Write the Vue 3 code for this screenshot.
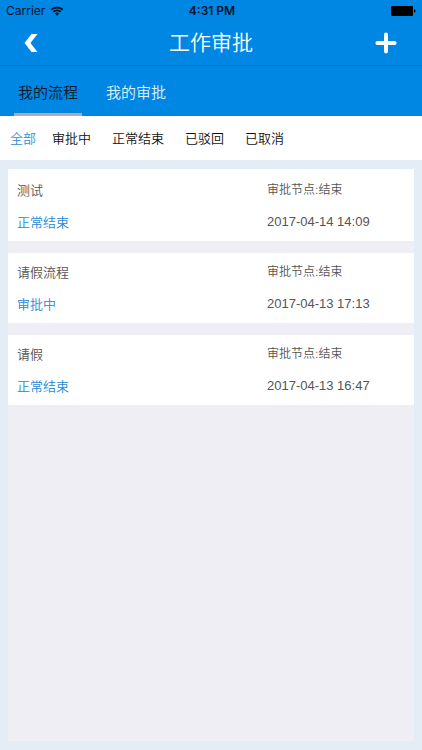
<script setup>
import { ref } from 'vue'

const tabs = ['我的流程', '我的审批']
const filters = ['全部', '审批中', '正常结束', '已驳回', '已取消']
const activeTab = ref(0)
const activeFilter = ref(0)
const items = [
  { title: '测试', status: '正常结束', node: '结束', time: '2017-04-14 14:09' },
  { title: '请假流程', status: '审批中', node: '结束', time: '2017-04-13 17:13' },
  { title: '请假', status: '正常结束', node: '结束', time: '2017-04-13 16:47' },
]
</script>

<template>
  <div class="screen">
    <header class="top">
      <div class="status-bar">
        <div class="carrier">
          <span>Carrier</span>
          <svg class="wifi" viewBox="0 0 14 10" aria-hidden="true">
            <path d="M1.2 3.7a8.4 8.4 0 0 1 11.6 0" />
            <path d="M3.3 5.9a5.3 5.3 0 0 1 7.4 0" />
            <path class="dot" d="M4.9 7.5a3 3 0 0 1 4.2 0L7 9.7z" />
          </svg>
        </div>
        <span class="clock">4:31 PM</span>
        <svg class="battery" viewBox="0 0 25 10" aria-hidden="true">
          <rect x="0" y="0" width="22" height="10" rx="1" />
          <path d="M23 3.3q1.6.3 1.6 1.7T23 6.7z" />
        </svg>
      </div>
      <div class="nav">
        <button class="icon-btn back" aria-label="返回">
          <svg viewBox="0 0 14 18" width="14" height="18"><path d="M7.5 0H13.5L6.500 9L13.5 18H7.5L0.5 9Z" /></svg>
        </button>
        <h1>工作审批</h1>
        <button class="icon-btn add" aria-label="新建">
          <svg viewBox="0 0 22 22" width="22" height="22"><path d="M11 2.400V19.600M2.400 11H19.600" /></svg>
        </button>
      </div>
    </header>

    <nav class="tabs">
      <button v-for="(t, i) in tabs" :key="t" :class="{ active: i === activeTab }" @click="activeTab = i">{{ t }}</button>
    </nav>

    <div class="filters">
      <button v-for="(f, i) in filters" :key="f" :class="{ active: i === activeFilter }" @click="activeFilter = i">{{ f }}</button>
    </div>

    <main class="content">
      <ul class="list">
        <li v-for="item in items" :key="item.time" class="card">
          <span class="title">{{ item.title }}</span>
          <span class="node">审批节点:{{ item.node }}</span>
          <a href="#" class="status">{{ item.status }}</a>
          <time class="time">{{ item.time }}</time>
        </li>
      </ul>
    </main>
  </div>
</template>

<style>
body {
  margin: 0;
}
</style>

<style scoped>
.screen {
  display: flex;
  flex-direction: column;
  min-height: 100vh;
  background: #e4edf5;
  font-family: Inter, "Noto Sans CJK SC", sans-serif;
  font-weight: 350;
}
button {
  margin: 0;
  padding: 0;
  border: 0;
  background: none;
  font: inherit;
  cursor: pointer;
}
.top {
  background: #0086e3;
  border-bottom: 1px solid #0078cf;
}
.status-bar {
  display: grid;
  grid-template-columns: 1fr auto 1fr;
  align-items: center;
  height: 21px;
  padding: 0 6px;
  font-size: 12px;
  font-weight: 400;
  color: #04142a;
}
.carrier {
  display: flex;
  align-items: center;
  gap: 5px;
}
.wifi {
  width: 14px;
  height: 10px;
  fill: none;
  stroke: #04142a;
  stroke-width: 2;
}
.wifi .dot {
  fill: #04142a;
  stroke: none;
}
.clock {
  padding-left: 2px;
  font-weight: 600;
}
.battery {
  justify-self: end;
  width: 25px;
  height: 10px;
  fill: #000;
}
.nav {
  display: grid;
  grid-template-columns: 62px 1fr 62px;
  align-items: center;
  height: 44px;
  padding-right: 5px;
}
.nav h1 {
  margin: 0;
  padding-left: 5px;
  text-align: center;
  font-size: 21px;
  line-height: 44px;
  font-weight: 350;
  color: #fff;
}
.icon-btn {
  display: flex;
  align-items: center;
  justify-content: center;
  height: 44px;
}
.back svg {
  fill: #fff;
}
.add svg {
  fill: none;
  stroke: #fff;
  stroke-width: 4;
  stroke-linecap: round;
}
.tabs {
  display: flex;
  gap: 20px;
  height: 50px;
  padding-left: 14px;
  background: #0086e3;
}
.tabs button {
  padding: 3px 4px 0;
  border-bottom: 3px solid transparent;
  font-size: 15px;
  color: #e0f1ff;
}
.tabs button.active {
  border-bottom-color: #b5a9ad;
  color: #06182b;
}
.filters {
  display: flex;
  gap: 1px;
  height: 44px;
  background: #fff;
}
.filters button {
  padding: 0 10px 2px;
  font-size: 13px;
  color: #111;
}
.filters button:first-child {
  padding-right: 5px;
}
.filters button.active {
  color: #2b8bd6;
}
.content {
  display: flex;
  flex: 1;
  padding: 9px 8px;
}
.list {
  display: flex;
  flex: 1;
  flex-direction: column;
  gap: 12px;
  margin: 0;
  padding: 0;
  background: #efeef4;
  list-style: none;
}
.card {
  display: grid;
  grid-template-columns: 1fr 147px;
  grid-auto-rows: 32px;
  align-items: center;
  padding: 3px 0 3px 9px;
  background: #fff;
  font-size: 13px;
  line-height: 20px;
  color: #555;
}
.card:first-child {
  padding-top: 5px;
}
.node {
  font-size: 12px;
}
.time {
  font-family: "Liberation Sans", Arial, sans-serif;
}
.status {
  color: #2488d8;
  text-decoration: none;
}
</style>
